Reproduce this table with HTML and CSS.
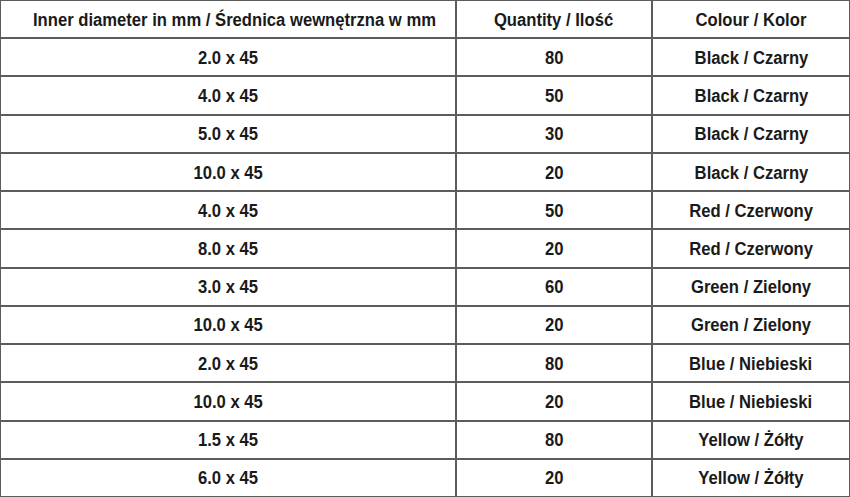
FILE: index.html
```html
<!DOCTYPE html>
<html>
<head>
<meta charset="utf-8">
<link rel="stylesheet" href="styles.css">
</head>
<body>
<div class="table">
  <div class="cell head-first"><span>Inner diameter in mm / Średnica wewnętrzna w mm</span></div>
  <div class="cell"><span>Quantity / Ilość</span></div>
  <div class="cell"><span>Colour / Kolor</span></div>

  <div class="cell"><span>2.0 x 45</span></div><div class="cell"><span>80</span></div><div class="cell"><span>Black / Czarny</span></div>
  <div class="cell"><span>4.0 x 45</span></div><div class="cell"><span>50</span></div><div class="cell"><span>Black / Czarny</span></div>
  <div class="cell"><span>5.0 x 45</span></div><div class="cell"><span>30</span></div><div class="cell"><span>Black / Czarny</span></div>
  <div class="cell"><span>10.0 x 45</span></div><div class="cell"><span>20</span></div><div class="cell"><span>Black / Czarny</span></div>
  <div class="cell"><span>4.0 x 45</span></div><div class="cell"><span>50</span></div><div class="cell"><span>Red / Czerwony</span></div>
  <div class="cell"><span>8.0 x 45</span></div><div class="cell"><span>20</span></div><div class="cell"><span>Red / Czerwony</span></div>
  <div class="cell"><span>3.0 x 45</span></div><div class="cell"><span>60</span></div><div class="cell"><span>Green / Zielony</span></div>
  <div class="cell"><span>10.0 x 45</span></div><div class="cell"><span>20</span></div><div class="cell"><span>Green / Zielony</span></div>
  <div class="cell"><span>2.0 x 45</span></div><div class="cell"><span>80</span></div><div class="cell"><span>Blue / Niebieski</span></div>
  <div class="cell"><span>10.0 x 45</span></div><div class="cell"><span>20</span></div><div class="cell"><span>Blue / Niebieski</span></div>
  <div class="cell"><span>1.5 x 45</span></div><div class="cell"><span>80</span></div><div class="cell"><span>Yellow / Żółty</span></div>
  <div class="cell"><span>6.0 x 45</span></div><div class="cell"><span>20</span></div><div class="cell"><span>Yellow / Żółty</span></div>
</div>
</body>
</html>
```
FILE: styles.css
```css
html, body {
  margin: 0;
  padding: 0;
  background: #ffffff;
}
.table {
  width: 850px;
  height: 497px;
  box-sizing: border-box;
  padding: 1px;
  background: #5c5c5c;
  display: grid;
  grid-template-columns: 454px 194px 1fr;
  grid-template-rows: repeat(13, 1fr);
  gap: 2px;
}
.cell {
  background: #ffffff;
  display: flex;
  align-items: center;
  justify-content: center;
  font-family: "Liberation Sans", Arial, sans-serif;
  font-weight: bold;
  font-size: 18.3px;
  color: #1a1a1a;
  padding-top: 1px;
  white-space: nowrap;
}
.head-first {
  padding-left: 13px;
}
.cell span {
  display: inline-block;
  transform: scaleX(0.91);
}
```
